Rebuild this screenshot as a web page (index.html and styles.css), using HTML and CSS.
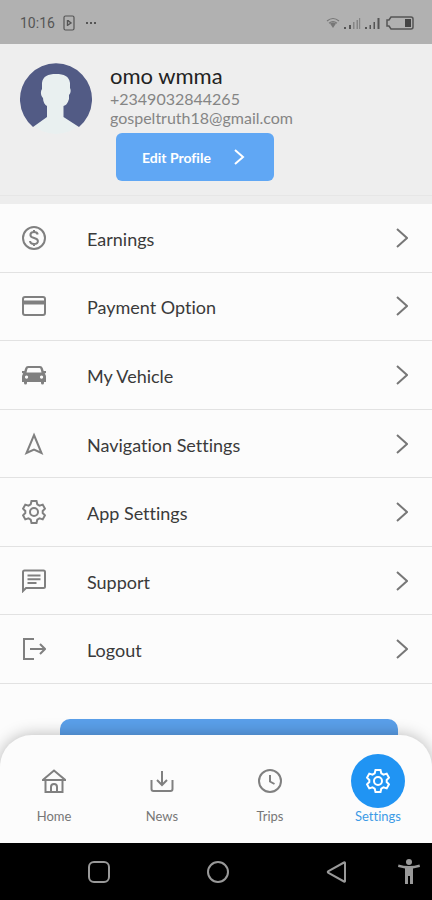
FILE: index.html
```html
<!DOCTYPE html>
<html lang="en">
<head>
<meta charset="utf-8">
<meta name="viewport" content="width=device-width, initial-scale=1">
<title>Settings</title>
<link rel="stylesheet" href="styles.css">
</head>
<body>
<div class="status">
  <span class="time">10:16</span>
  <svg class="card-icon" width="12" height="16" viewBox="0 0 12 16" fill="none" stroke="currentColor"><rect x="1" y="1" width="10" height="14" rx="1.5" stroke-width="1.2"/><path d="M4.5 5v6M5 5.5l3 2.5-3 2" stroke-width="1.4"/></svg>
  <span class="dots"><i></i><i></i><i></i></span>
  <span class="signals">
    <svg width="14" height="12" viewBox="0 0 14 12" fill="none" stroke="#777" stroke-width="1.2"><path d="M1 4Q7-1 13 4M3 6.200Q7 3 11 6.200"/><path d="M4 6.500Q7 4.500 10 6.500L7 11Z" fill="#777" stroke="none"/></svg>
    <svg width="17" height="13" viewBox="0 0 17 13"><g fill="#555"><path d="M0 10h2v2H0zM5 8h2v4H5z"/></g><path fill="#858585" d="M9 5h1.500v7H9zM12.500 3H14v9h-1.500zM15 1h1.200v11H15z"/></svg>
    <svg width="17" height="13" viewBox="0 0 17 13" fill="#555"><path d="M0 10h2v2H0zM4.500 8H6v4H4.500zM8.500 5H10v7H8.500zM12.500 1H14.500v11h-2z"/></svg>
    <svg width="28" height="14" viewBox="0 0 28 14"><path d="M5 1h20a2 2 0 0 1 2 2v8a2 2 0 0 1-2 2H5L3 10H1V4h2z" fill="none" stroke="#555" stroke-width="1.500"/><path d="M19 3h6v8h-6z" fill="#444"/></svg>
  </span>
</div>

<header class="profile">
  <svg class="avatar" viewBox="0 0 72 72" role="img" aria-label="Profile photo">
    <circle cx="36" cy="36" r="35" fill="#e9f0f0"/>
    <path fill="#525b85" d="M13 64A36 36 0 1 1 59 64L43.500 54V43C47 42 48 39 49 36V32C51 30 51 27 50 25V20C49 13 44 11 36 11S23 13 22 20V26C20 29 21 33 23 35C23 39 25 42 27 43V54Z"/>
  </svg>
  <div class="info">
    <h1>omo wmma</h1>
    <p>+2349032844265</p>
    <p>gospeltruth18@gmail.com</p>
    <button class="edit" type="button">Edit Profile
      <svg width="12" height="16" viewBox="0 0 12 16" fill="none" stroke="currentColor" stroke-width="2"><path d="M2 1l8 7-8 7"/></svg>
    </button>
  </div>
</header>

<main>
  <ul class="menu">
    <li><a href="#earnings"><svg class="icon" viewBox="0 0 24 24"><circle cx="12" cy="12" r="11"/><path d="M15.700 8.500C15.400 6.700 13.900 6 12 6S8.400 7 8.400 8.900c0 4.100 7.500 2 7.500 6.100 0 2-1.700 3-3.900 3s-3.800-1-4-3M12 4v2M12 18v2"/></svg><span>Earnings</span><svg class="chev" viewBox="0 0 12 20"><path d="M1 1l10 9-10 9"/></svg></a></li>
    <li><a href="#payment"><svg class="icon" viewBox="0 0 24 24"><rect x="1" y="3" width="22" height="18" rx="2"/><path d="M1 8.500h22" stroke-width="4"/></svg><span>Payment Option</span><svg class="chev" viewBox="0 0 12 20"><path d="M1 1l10 9-10 9"/></svg></a></li>
    <li><a href="#vehicle"><svg class="icon car" viewBox="0 0 24 24"><path fill="currentColor" stroke="none" fill-rule="evenodd" d="M6 3h12q2 0 2.700 2l1 3H24v2l-1.300.5q1.300 1.500 1.300 3V19h-2v1q0 1.500-1.500 1.500T19 20v-1H5v1q0 1.500-1.500 1.500T2 20v-1H0v-5.500q0-1.500 1.300-3L0 10V8h2.300l1-3Q4 3 6 3zm.5 2Q5.700 5 5.400 6L4.500 9.500h15L18.600 6q-.3-1-1.100-1zM4.500 12.500a1.600 1.600 0 1 0 .1 0zm15 0a1.600 1.600 0 1 0 .1 0z"/></svg><span>My Vehicle</span><svg class="chev" viewBox="0 0 12 20"><path d="M1 1l10 9-10 9"/></svg></a></li>
    <li><a href="#navigation"><svg class="icon" viewBox="0 0 24 24"><path d="M12 3l7.500 18L12 17.500 4.500 21z"/></svg><span>Navigation Settings</span><svg class="chev" viewBox="0 0 12 20"><path d="M1 1l10 9-10 9"/></svg></a></li>
    <li><a href="#app"><svg class="icon" viewBox="0 0 24 24"><path d="M9.500 1h5l.8 3.300 2.200 1.300 3.200-1 2.300 4.100-2.300 2.300v2l2.300 2.300-2.300 4.100-3.200-1-2.200 1.300-.8 3.300h-5l-.8-3.300-2.200-1.300-3.200 1L1 15.300 3.300 13v-2L1 8.700l2.300-4.100 3.200 1 2.200-1.300z"/><circle cx="12" cy="12" r="4"/></svg><span>App Settings</span><svg class="chev" viewBox="0 0 12 20"><path d="M1 1l10 9-10 9"/></svg></a></li>
    <li><a href="#support"><svg class="icon" viewBox="0 0 24 24"><path d="M1 22V3q0-1.500 1.500-1.500h19Q23 1.500 23 3v14.500q0 1.500-1.500 1.500H4zM5.500 6.500h13M5.500 10.300h13M5.500 14h9"/></svg><span>Support</span><svg class="chev" viewBox="0 0 12 20"><path d="M1 1l10 9-10 9"/></svg></a></li>
    <li><a href="#logout"><svg class="icon" viewBox="0 0 24 24"><path d="M12 2H2v20h10M8 12h15M18 7l5 5-5 5"/></svg><span>Logout</span><svg class="chev" viewBox="0 0 12 20"><path d="M1 1l10 9-10 9"/></svg></a></li>
  </ul>
  <div class="banner"></div>
</main>

<nav class="tabs" aria-label="Main">
  <a href="#home"><span class="tab-icon"><svg class="icon" viewBox="0 0 24 24"><path d="M.8 11L12 1.500 23.200 11zM3.500 11v12h17V11M9 23v-5a3 3 0 0 1 6 0v5"/></svg></span>Home</a>
  <a href="#news"><span class="tab-icon"><svg class="icon" viewBox="0 0 24 24"><path d="M1.500 11v9q0 2 2 2h17q2 0 2-2v-9M12 2v14M7 11l5 5 5-5"/></svg></span>News</a>
  <a href="#trips"><span class="tab-icon"><svg class="icon" viewBox="0 0 24 24"><circle cx="12" cy="12" r="11"/><path d="M12 6v6.500l4.500 2.500"/></svg></span>Trips</a>
  <a class="active" href="#settings" aria-current="page"><span class="tab-icon"><svg class="icon" viewBox="0 0 24 24"><path d="M9.500 1h5l.8 3.300 2.200 1.300 3.200-1 2.300 4.100-2.300 2.300v2l2.300 2.300-2.300 4.100-3.200-1-2.200 1.300-.8 3.300h-5l-.8-3.300-2.200-1.300-3.200 1L1 15.300 3.300 13v-2L1 8.700l2.300-4.100 3.200 1 2.200-1.300z"/><circle cx="12" cy="12" r="4"/></svg></span>Settings</a>
</nav>

<div class="system">
  <button type="button" aria-label="Recent apps"><svg viewBox="0 0 24 24"><rect x="2" y="2" width="20" height="20" rx="5"/></svg></button>
  <button type="button" aria-label="Home screen"><svg viewBox="0 0 24 24"><circle cx="12" cy="12" r="10"/></svg></button>
  <button type="button" aria-label="Back"><svg viewBox="0 0 24 24"><path d="M20 3v18q0 1-1 .5L3.500 13q-1.500-1 0-2L19 2.500q1-.5 1 .5z"/></svg></button>
  <button type="button" aria-label="Accessibility"><svg viewBox="0 0 24 26"><g fill="#999" stroke="none"><circle cx="12" cy="3" r="3"/><path d="M1.500 5.500Q12 8.500 22.500 5.500l.5 2.500-7 1.500V25h-3v-8h-2v8H8V9.500L1 8z"/></g></svg></button>
</div>
</body>
</html>
```
FILE: styles.css
```css
* { box-sizing: border-box; }
body {
  margin: 0;
  min-height: 100vh;
  display: flex;
  flex-direction: column;
  background: #fcfcfc;
  color: #3a3a3a;
  font-family: Lato, "Liberation Sans", sans-serif;
  font-variant-ligatures: none;
}
h1, p, ul { margin: 0; padding: 0; }
a { color: inherit; text-decoration: none; }
svg { display: block; flex: none; }
button { border: 0; padding: 0; font: inherit; cursor: pointer; }

.status {
  height: 44px;
  padding: 2px 18px 0 20px;
  display: flex;
  align-items: center;
  gap: 8px;
  background: #b1b1b1;
  color: #555;
  font: 14px/20px Roboto, sans-serif;
}
.dots { display: flex; gap: 2px; margin-left: 3px; }
.dots i { width: 2px; height: 2px; background: #555; }
.signals { display: flex; align-items: center; gap: 4px; margin-left: auto; }

.profile {
  height: 160px;
  padding: 19px 20px 0;
  display: flex;
  gap: 18px;
  background: linear-gradient(#eee 0 151px, #e6e6e6 151px 152px, #ededed 152px);
}
.avatar { width: 72px; height: 72px; }
.info { color: #858585; font-size: 16px; line-height: 19px; }
.info h1 { color: #222; font-size: 22px; line-height: 26px; font-weight: 400; }
.edit {
  display: flex;
  align-items: center;
  justify-content: space-between;
  width: 158px;
  height: 48px;
  margin: 6px 0 0 6px;
  padding: 0 29px 0 26px;
  border-radius: 6px;
  background: #60a7f4;
  color: #fff;
  font-size: 14px;
  font-weight: 700;
}

main { flex: 1; display: flex; flex-direction: column; }
.menu { flex: 1; display: flex; flex-direction: column; list-style: none; }
.menu li { flex: 1; min-height: 56px; display: flex; border-bottom: 1px solid #e2e2e2; }
.menu a {
  flex: 1;
  display: flex;
  align-items: center;
  padding: 0 24px 0 22px;
  font-size: 18px;
  line-height: 24px;
}
.menu span { flex: 1; margin-left: 41px; padding-top: 2px; }
.icon {
  width: 24px;
  height: 24px;
  color: #808080;
  fill: none;
  stroke: currentColor;
  stroke-width: 2;
}
.chev { width: 12px; height: 20px; fill: none; stroke: #777; stroke-width: 2; }
.banner {
  height: 16px;
  margin: 35px 34px 0 60px;
  border-radius: 10px 10px 0 0;
  background: #5a9fe9;
}

.tabs {
  position: relative;
  height: 108px;
  padding-top: 19px;
  display: grid;
  grid-template-columns: repeat(4, 1fr);
  border-radius: 32px 32px 0 0;
  background: #fcfcfc;
  box-shadow: 0 0 16px rgba(0, 0, 0, .28);
}
.tabs a {
  display: flex;
  flex-direction: column;
  align-items: center;
  color: #777;
  font-size: 13px;
  line-height: 16px;
}
.tab-icon { display: grid; place-items: center; width: 54px; height: 54px; border-radius: 50%; }
.tabs .active { color: #3c9be6; }
.active .tab-icon { background: #2094f3; }
.active .icon { color: #fff; }

.system {
  position: relative;
  height: 57px;
  padding: 0 11px 0 39px;
  display: grid;
  grid-template-columns: 1fr 1fr 1fr 24px;
  align-items: center;
  justify-items: center;
  background: #000;
}
.system button { background: none; }
.system svg { width: 24px; height: 26px; fill: none; stroke: #999; stroke-width: 2; }
```
